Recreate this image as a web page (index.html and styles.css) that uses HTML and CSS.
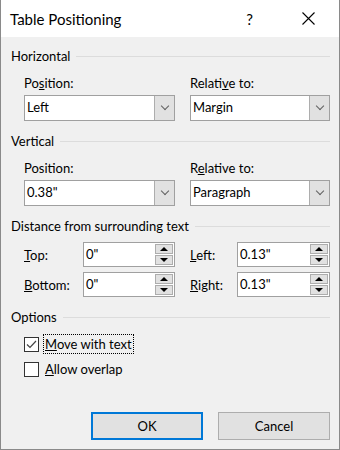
FILE: index.html
```html
<!DOCTYPE html>
<html lang="en">
<head>
  <meta charset="UTF-8">
  <title>Table Positioning</title>
  <link rel="stylesheet" href="styles.css">
</head>
<body>
  <div class="dialog">
    <div class="titlebar">
      <span class="title">Table Positioning</span>
      <span class="help">?</span>
      <span class="close">
        <svg width="13" height="13" viewBox="0 0 13 13"><path d="M0.5 0.5 L12.5 12.5 M12.5 0.5 L0.5 12.5" stroke="#000" stroke-width="1.1" fill="none"/></svg>
      </span>
    </div>

    <div class="content">
      <div class="group-head">Horizontal</div>
      <div class="pair">
        <div class="field">
          <label>Po<u>s</u>ition:</label>
          <div class="combo"><span class="value">Left</span><span class="drop"></span></div>
        </div>
        <div class="field">
          <label>Relati<u>v</u>e to:</label>
          <div class="combo"><span class="value">Margin</span><span class="drop"></span></div>
        </div>
      </div>

      <div class="group-head">Vertical</div>
      <div class="pair">
        <div class="field">
          <label>Posit<u>i</u>on:</label>
          <div class="combo"><span class="value">0.38"</span><span class="drop"></span></div>
        </div>
        <div class="field">
          <label>R<u>e</u>lative to:</label>
          <div class="combo"><span class="value">Paragraph</span><span class="drop"></span></div>
        </div>
      </div>

      <div class="group-head">Distance from surrounding text</div>
      <div class="spins">
        <div class="spin-row left">
          <label><u>T</u>op:</label>
          <div class="spin"><span class="value">0"</span><span class="arrows"><span class="up"></span><span class="down"></span></span></div>
        </div>
        <div class="spin-row right">
          <label><u>L</u>eft:</label>
          <div class="spin"><span class="value">0.13"</span><span class="arrows"><span class="up"></span><span class="down"></span></span></div>
        </div>
        <div class="spin-row left">
          <label><u>B</u>ottom:</label>
          <div class="spin"><span class="value">0"</span><span class="arrows"><span class="up"></span><span class="down"></span></span></div>
        </div>
        <div class="spin-row right">
          <label><u>R</u>ight:</label>
          <div class="spin"><span class="value">0.13"</span><span class="arrows"><span class="up"></span><span class="down"></span></span></div>
        </div>
      </div>

      <div class="group-head">Options</div>
      <div class="checks">
        <div class="check">
          <span class="box">
            <svg width="13" height="13" viewBox="0 0 13 13"><path d="M2 6.5 L5 9.5 L11 3" stroke="#444" stroke-width="1.2" fill="none"/></svg>
          </span>
          <span class="check-label focused"><u>M</u>ove with text</span>
        </div>
        <div class="check">
          <span class="box"></span>
          <span class="check-label"><u>A</u>llow overlap</span>
        </div>
      </div>

      <div class="buttons">
        <button class="btn default">OK</button>
        <button class="btn">Cancel</button>
      </div>
    </div>
  </div>
</body>
</html>
```

FILE: styles.css
```css
:root {
  --face: #f0f0f0;
  --btn-face: #e1e1e1;
  --btn-border: #adadad;
  --field-border: #a0a0a0;
  --rule: #dcdcdc;
  --accent: #0078d7;
}

* {
  box-sizing: border-box;
}

body {
  margin: 0;
  font-family: Lato, "Noto Sans", sans-serif;
  font-size: 13px;
  color: #000;
  background: #fff;
}

.dialog {
  width: 340px;
  height: 450px;
  background: var(--face);
  border: 1px solid #8a8a8a;
  border-top: none;
}

.titlebar {
  height: 37px;
  background: #fff;
  display: flex;
  align-items: center;
  padding-left: 9px;
}

.title {
  flex: 1;
  font-size: 15px;
}

.help {
  font-size: 15px;
  margin-right: 49px;
}

.close {
  display: flex;
  margin-right: 24px;
}

.content {
  padding: 9px 9px 0 9px;
}

.group-head {
  display: flex;
  align-items: center;
  height: 20px;
  line-height: 20px;
  padding-left: 1px;
}

.group-head::after {
  content: '';
  flex: 1;
  margin-left: 6px;
  border-top: 1px solid var(--rule);
}

label {
  display: block;
  height: 20px;
  line-height: 20px;
}

.pair {
  display: grid;
  grid-template-columns: 151px 140px;
  column-gap: 15px;
  padding-left: 14px;
  margin: 7px 0 10px;
}

.field label {
  margin-bottom: 2px;
}

.combo {
  display: flex;
  height: 26px;
  background: #fff;
  border: 1px solid var(--field-border);
}

.value {
  flex: 1;
  padding-left: 2px;
  line-height: 23px;
}

.drop {
  width: 20px;
  background: var(--btn-face);
  border-left: 1px solid var(--btn-border);
  display: flex;
  align-items: center;
  justify-content: center;
}

.drop::before {
  content: '';
  width: 5px;
  height: 5px;
  border-right: 1px solid #606060;
  border-bottom: 1px solid #606060;
  transform: translateY(-2px) rotate(45deg);
}

.spins {
  display: grid;
  grid-template-columns: 151px 140px;
  column-gap: 15px;
  row-gap: 5px;
  padding-left: 14px;
  margin: 6px 0 10px;
}

.spin-row {
  display: flex;
  align-items: center;
}

.spin-row.left label {
  width: 59px;
}

.spin-row.right label {
  width: 47px;
}

.spin {
  flex: 1;
  display: flex;
  height: 25px;
  background: #fff;
  border: 1px solid var(--field-border);
}

.arrows {
  width: 20px;
  display: flex;
  flex-direction: column;
  padding: 1px;
  gap: 1px;
}

.up, .down {
  flex: 1;
  background: var(--btn-face);
  border: 1px solid var(--btn-border);
  display: flex;
  align-items: center;
  justify-content: center;
}

.up::before {
  content: '';
  border-left: 4px solid transparent;
  border-right: 4px solid transparent;
  border-bottom: 4px solid #000;
}

.down::before {
  content: '';
  border-left: 4px solid transparent;
  border-right: 4px solid transparent;
  border-top: 4px solid #000;
}

.checks {
  display: flex;
  flex-direction: column;
  gap: 5px;
  padding-left: 14px;
  margin-top: 7px;
}

.check {
  display: flex;
  align-items: center;
  height: 20px;
}

.box {
  width: 15px;
  height: 15px;
  background: #fff;
  border: 1px solid #333;
  display: flex;
  align-items: center;
  justify-content: center;
  margin-right: 4px;
}

.check-label {
  padding: 0 1px;
  line-height: 18px;
  border: 1px dotted transparent;
}

.check-label.focused {
  border-color: #000;
}

.buttons {
  display: flex;
  justify-content: flex-end;
  gap: 15px;
  margin-top: 33px;
}

.btn {
  width: 112px;
  height: 28px;
  font-family: inherit;
  font-size: 13px;
  background: var(--btn-face);
  border: 1px solid var(--btn-border);
  padding: 0;
}

.btn.default {
  border: 2px solid var(--accent);
}
```
